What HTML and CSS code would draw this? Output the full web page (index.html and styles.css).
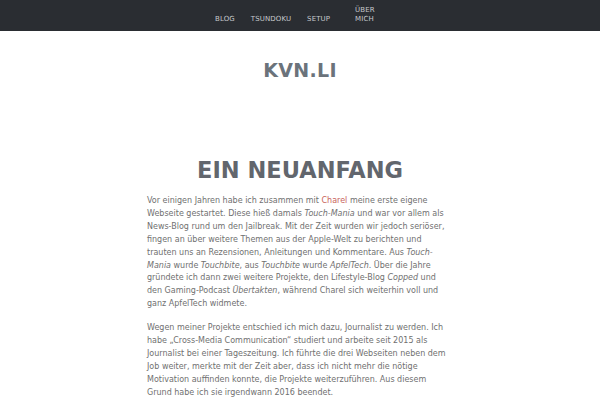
FILE: index.html
```html
<!DOCTYPE html>
<html lang="de">
<head>
<meta charset="utf-8">
<title>kvn.li</title>
<link rel="stylesheet" href="styles.css">
</head>
<body>
<nav class="topnav">
  <ul class="menu">
    <li class="menu-item"><a href="#">Blog</a></li>
    <li class="menu-item"><a href="#">Tsundoku</a></li>
    <li class="menu-item"><a href="#">Setup</a></li>
    <li class="menu-item menu-item--narrow"><a href="#">Über mich</a></li>
  </ul>
</nav>
<header class="site-header">
  <h1 class="site-title">KVN.LI</h1>
</header>
<main class="content">
  <article class="post">
    <h2 class="post-title">Ein Neuanfang</h2>
    <p>Vor einigen Jahren habe ich zusammen mit <a href="#">Charel</a> meine erste eigene Webseite gestartet. Diese hieß damals <em>Touch-Mania</em> und war vor allem als News-Blog rund um den Jailbreak. Mit der Zeit wurden wir jedoch seriöser, fingen an über weitere Themen aus der Apple-Welt zu berichten und trauten uns an Rezensionen, Anleitungen und Kommentare. Aus <em>Touch-Mania</em> wurde <em>Touchbite</em>, aus <em>Touchbite</em> wurde <em>ApfelTech</em>. Über die Jahre gründete ich dann zwei weitere Projekte, den Lifestyle-Blog <em>Copped</em> und den Gaming-Podcast <em>Übertakten</em>, während Charel sich weiterhin voll und ganz ApfelTech widmete.</p>
    <p>Wegen meiner Projekte entschied ich mich dazu, Journalist zu werden. Ich habe „Cross-Media Communication“ studiert und arbeite seit 2015 als Journalist bei einer Tageszeitung. Ich führte die drei Webseiten neben dem Job weiter, merkte mit der Zeit aber, dass ich nicht mehr die nötige Motivation auffinden konnte, die Projekte weiterzuführen. Aus diesem Grund habe ich sie irgendwann 2016 beendet.</p>
  </article>
</main>
</body>
</html>
```
FILE: styles.css
```css
html, body {
  margin: 0;
  padding: 0;
  background: #ffffff;
}
body {
  font-family: "DejaVu Sans", "Liberation Sans", sans-serif;
  color: #707070;
}
.topnav {
  background: #2a2d32;
  height: 31px;
  box-sizing: border-box;
  padding: 0 0 7px 207px;
  display: flex;
  align-items: flex-end;
}
.menu {
  list-style: none;
  margin: 0;
  padding: 0;
  display: flex;
  align-items: flex-end;
}
.menu-item {
  padding: 0 8px;
  font-size: 7px;
  line-height: 9px;
  text-transform: uppercase;
  letter-spacing: 0.1px;
}
.menu-item--narrow {
  width: 22px;
  padding-left: 17px;
}
.menu-item a {
  color: #c6c9cd;
  text-decoration: none;
}
.site-header {
  text-align: center;
  padding-top: 27px;
}
.site-title {
  margin: 0;
  font-size: 19px;
  line-height: 24px;
  font-weight: bold;
  color: #6b737b;
  letter-spacing: 0.3px;
}
.content {
  width: 306px;
  margin: 0 auto;
}
.post-title {
  margin: 74px 0 0;
  text-align: center;
  font-size: 22.5px;
  line-height: 28px;
  font-weight: bold;
  color: #62666d;
  text-transform: uppercase;
}
.post p {
  margin: 11.3px 0 0;
  font-size: 8px;
  line-height: 12.85px;
}
.post p + p {
  margin-top: 11.5px;
}
.post a {
  color: #c8625a;
  text-decoration: none;
}
```
